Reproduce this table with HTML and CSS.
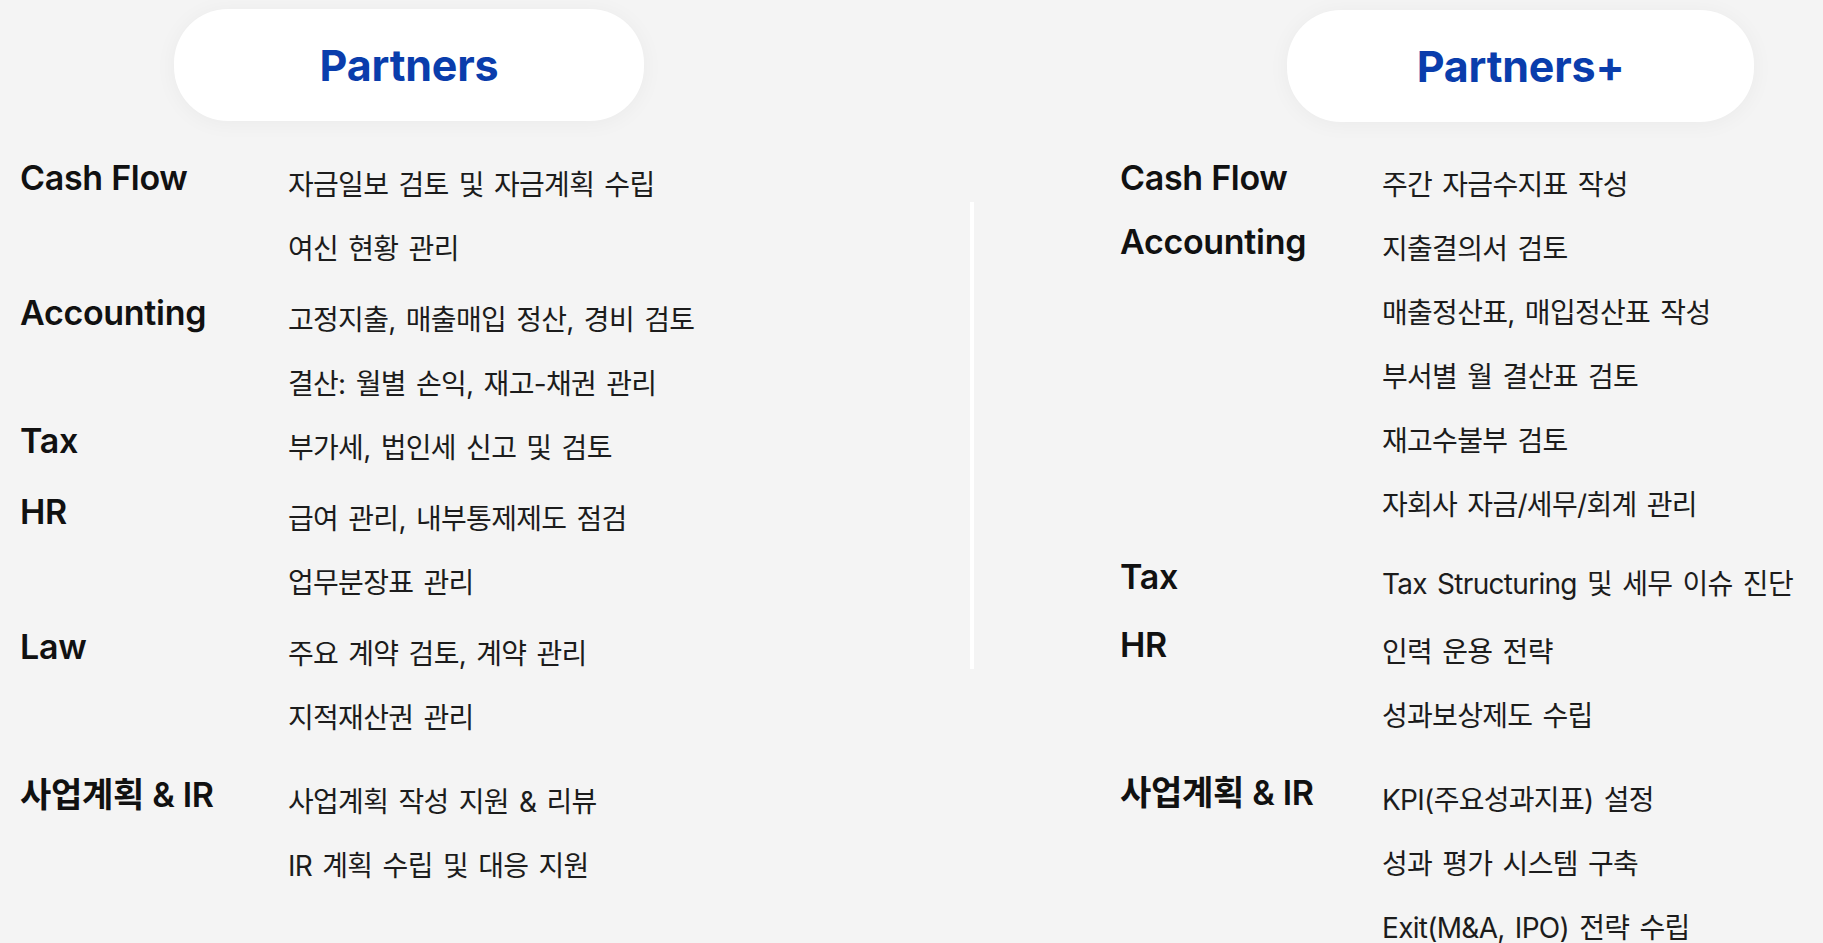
FILE: index.html
```html
<!DOCTYPE html>
<html lang="ko">
<head>
    <meta charset="UTF-8">
    <meta name="viewport" content="width=device-width, initial-scale=1.0">
    <title>Partners</title>
    <link rel="stylesheet" href="styles.css">
</head>
<body>
    <main class="plans">
        <section class="plan">
            <h2 class="plan-title">Partners</h2>
            <div class="groups">
                <div class="group">
                    <h4 class="label">Cash Flow</h4>
                    <ul class="items">
                        <li>자금일보 검토 및 자금계획 수립</li>
                        <li>여신 현황 관리</li>
                    </ul>
                </div>
                <div class="group">
                    <h4 class="label">Accounting</h4>
                    <ul class="items">
                        <li>고정지출, 매출매입 정산, 경비 검토</li>
                        <li>결산: 월별 손익, 재고-채권 관리</li>
                    </ul>
                </div>
                <div class="group tight">
                    <h4 class="label">Tax</h4>
                    <ul class="items">
                        <li>부가세, 법인세 신고 및 검토</li>
                    </ul>
                </div>
                <div class="group">
                    <h4 class="label">HR</h4>
                    <ul class="items">
                        <li>급여 관리, 내부통제제도 점검</li>
                        <li>업무분장표 관리</li>
                    </ul>
                </div>
                <div class="group">
                    <h4 class="label">Law</h4>
                    <ul class="items">
                        <li>주요 계약 검토, 계약 관리</li>
                        <li>지적재산권 관리</li>
                    </ul>
                </div>
                <div class="group wide">
                    <h4 class="label">사업계획 &amp; IR</h4>
                    <ul class="items">
                        <li>사업계획 작성 지원 &amp; 리뷰</li>
                        <li>IR 계획 수립 및 대응 지원</li>
                    </ul>
                </div>
            </div>
        </section>

        <div class="divider"></div>

        <section class="plan plus">
            <h2 class="plan-title">Partners+</h2>
            <div class="groups">
                <div class="group">
                    <h4 class="label">Cash Flow</h4>
                    <ul class="items">
                        <li>주간 자금수지표 작성</li>
                    </ul>
                </div>
                <div class="group tight">
                    <h4 class="label">Accounting</h4>
                    <ul class="items">
                        <li>지출결의서 검토</li>
                        <li>매출정산표, 매입정산표 작성</li>
                        <li>부서별 월 결산표 검토</li>
                        <li>재고수불부 검토</li>
                        <li>자회사 자금/세무/회계 관리</li>
                    </ul>
                </div>
                <div class="group mid">
                    <h4 class="label">Tax</h4>
                    <ul class="items">
                        <li>Tax Structuring 및 세무 이슈 진단</li>
                    </ul>
                </div>
                <div class="group snug">
                    <h4 class="label">HR</h4>
                    <ul class="items">
                        <li>인력 운용 전략</li>
                        <li>성과보상제도 수립</li>
                    </ul>
                </div>
                <div class="group wide">
                    <h4 class="label">사업계획 &amp; IR</h4>
                    <ul class="items">
                        <li>KPI(주요성과지표) 설정</li>
                        <li>성과 평가 시스템 구축</li>
                        <li>Exit(M&amp;A, IPO) 전략 수립</li>
                    </ul>
                </div>
            </div>
        </section>
    </main>
</body>
</html>
```

FILE: styles.css
```css
*{
    margin: 0;
    padding: 0;
    box-sizing: border-box;
}

body{
    background: #f4f4f4;
    font-family: "Inter", "Noto Sans CJK KR", sans-serif;
    color: #1c1c1c;
    overflow: hidden;
}

ul{
    list-style: none;
}

.plans{
    display: flex;
    align-items: flex-start;
}

.plan{
    width: 970px;
    padding: 9px 0 0 20px;
}

.plan.plus{
    width: auto;
    flex: 1;
    padding: 10px 0 0 146px;
}

.plan-title{
    width: 470px;
    height: 112px;
    margin-left: 154px;
    border-radius: 54px;
    background: #fff;
    box-shadow: 0 2px 22px rgba(0, 0, 0, 0.045);
    display: flex;
    align-items: center;
    justify-content: center;
    font-size: 43px;
    font-weight: 700;
    letter-spacing: -0.2px;
    color: #0a3dac;
}

.plan.plus .plan-title{
    width: 467px;
    margin-left: 167px;
}

.groups{
    margin-top: 32px;
}

.plan.plus .groups{
    margin-top: 31px;
}

.group{
    display: flex;
    margin-top: 7px;
}

.group:first-child,
.group.tight{
    margin-top: 0;
}

.group.snug{
    margin-top: 4px;
}

.group.mid{
    margin-top: 15px;
}

.group.wide{
    margin-top: 20px;
}

.label{
    flex: 0 0 268px;
    line-height: 50px;
    font-size: 34px;
    font-weight: 600;
    letter-spacing: -0.3px;
    color: #111;
}

.plan.plus .label{
    flex-basis: 262px;
}

.items li{
    line-height: 64px;
    font-size: 28px;
    font-weight: 400;
    letter-spacing: -0.7px;
    word-spacing: 3px;
    white-space: nowrap;
}

.divider{
    width: 4px;
    height: 467px;
    margin-top: 202px;
    background: #fff;
}
```
